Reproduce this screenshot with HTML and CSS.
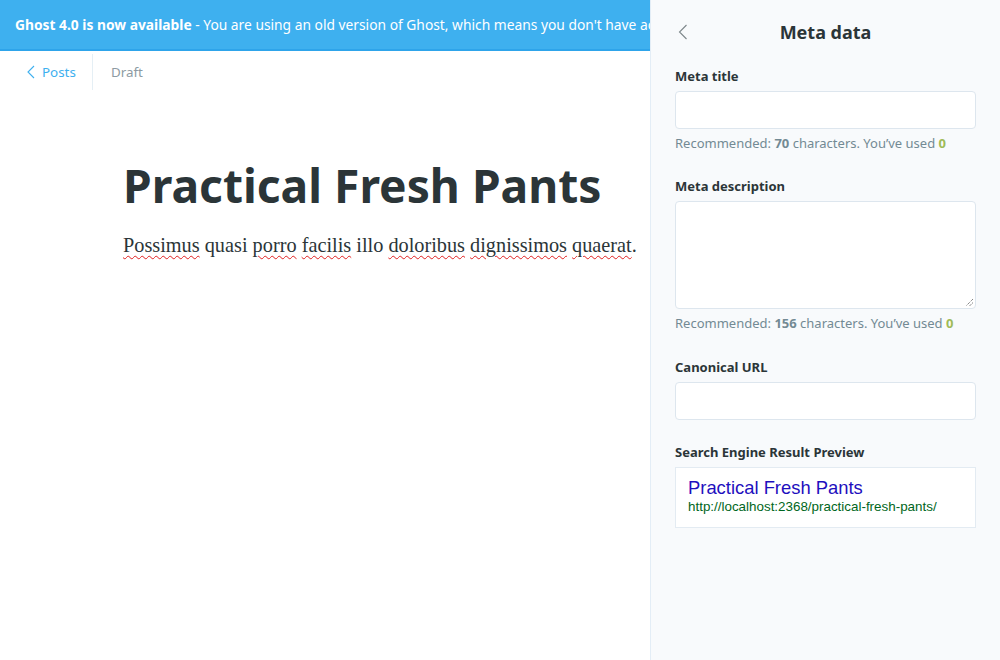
FILE: index.html
```html
<!DOCTYPE html>
<html>
<head>
<meta charset="utf-8">
<link rel="stylesheet" href="styles.css">
</head>
<body>
<div class="app">
  <main class="main">
    <div class="banner"><strong>Ghost 4.0 is now available</strong> - You are using an old version of Ghost, which means you don't have ac</div>
    <nav class="crumbs">
      <a class="back">
        <svg width="9" height="14" viewBox="0 0 9 14"><path d="M8 1 L2 7 L8 13" fill="none" stroke="#3eb0ef" stroke-width="1.1"/></svg>
        Posts
      </a>
      <span class="sep"></span>
      <span class="status">Draft</span>
    </nav>
    <article class="editor">
      <h1 class="title">Practical Fresh Pants</h1>
      <p class="body"><span class="sp">Possimus</span> quasi <span class="sp">porro</span> <span class="sp">facilis</span> illo <span class="sp">doloribus</span> <span class="sp">dignissimos</span> <span class="sp">quaerat</span>.</p>
    </article>
  </main>
  <aside class="panel">
    <header class="panel-head">
      <svg class="panel-back" width="10" height="16" viewBox="0 0 10 16"><path d="M8.5 1 L1.5 8 L8.5 15" fill="none" stroke="#7d878a" stroke-width="1.1"/></svg>
      <h2>Meta data</h2>
    </header>
    <div class="field">
      <label>Meta title</label>
      <div class="input"></div>
      <p class="hint">Recommended: <b>70</b> characters. You’ve used <b class="ok">0</b></p>
    </div>
    <div class="field field-tall">
      <label>Meta description</label>
      <div class="input textarea">
        <svg class="grip" width="9" height="9" viewBox="0 0 9 9"><path d="M8 1 L1 8 M8 4.5 L4.5 8" stroke="#555" stroke-width="1" stroke-dasharray="1 1"/></svg>
      </div>
      <p class="hint">Recommended: <b>156</b> characters. You’ve used <b class="ok">0</b></p>
    </div>
    <div class="field field-plain">
      <label>Canonical URL</label>
      <div class="input"></div>
    </div>
    <div class="field">
      <label>Search Engine Result Preview</label>
      <div class="serp">
        <div class="serp-title">Practical Fresh Pants</div>
        <div class="serp-url">http://localhost:2368/practical-fresh-pants/</div>
      </div>
    </div>
  </aside>
</div>
</body>
</html>
```
FILE: styles.css
```css
* { box-sizing: border-box; }
html, body { margin: 0; padding: 0; }
body {
  width: 1000px;
  height: 660px;
  overflow: hidden;
  font-family: "Noto Sans", "Open Sans", sans-serif;
  color: #3c484e;
  background: #fff;
}
.app {
  display: flex;
  height: 660px;
}
.main {
  width: 650px;
  flex: none;
  overflow: hidden;
}
.banner {
  height: 51px;
  background: #3eb0ef;
  border-bottom: 2px solid #2ea4ea;
  color: #fff;
  font-size: 13.8px;
  padding: 0 15px;
  line-height: 49px;
  white-space: nowrap;
  overflow: hidden;
}
.banner strong { font-weight: 700; }
.crumbs {
  display: flex;
  align-items: center;
  height: 40px;
  margin-top: 1px;
  font-size: 13.4px;
}
.back {
  display: flex;
  align-items: center;
  gap: 7px;
  color: #3eb0ef;
  padding-left: 26px;
  padding-right: 16px;
}
.sep {
  width: 1px;
  height: 36px;
  background: #e5eff5;
}
.status {
  color: #8d9ba3;
  padding-left: 18px;
}
.editor {
  padding: 0 0 0 123px;
  margin-top: 64px;
}
.title {
  margin: 0;
  font-size: 46.2px;
  line-height: 60px;
  font-weight: 700;
  color: #2b3538;
  white-space: nowrap;
}
.body {
  margin: 14px 0 0;
  font-family: "Liberation Serif", serif;
  font-size: 20.3px;
  line-height: 30px;
  color: #2b3538;
  white-space: nowrap;
}
.sp {
  text-decoration: underline wavy #e02020;
  text-decoration-thickness: 1px;
  text-underline-offset: 3px;
}
.panel {
  flex: 1;
  background: #f8fafc;
  border-left: 1px solid #e3edf6;
  padding: 0 24px 0 24px;
}
.panel-head {
  position: relative;
  height: 67px;
  padding-bottom: 3px;
  display: flex;
  align-items: center;
  justify-content: center;
}
.panel-back {
  position: absolute;
  left: 3px;
  top: 24px;
}
.panel-head h2 {
  margin: 0;
  font-size: 18px;
  font-weight: 700;
  color: #2b3538;
}
.field {
  margin-bottom: 25px;
}
.field-tall {
  margin-bottom: 26px;
}
.field-plain {
  margin-bottom: 23px;
}
.field label {
  display: block;
  font-size: 13px;
  font-weight: 700;
  color: #2b3538;
  line-height: 18px;
  margin-bottom: 6px;
}
.input {
  height: 38px;
  background: #fff;
  border: 1px solid #dde6ee;
  border-radius: 4px;
}
.textarea {
  height: 108px;
  position: relative;
}
.grip {
  position: absolute;
  right: 1px;
  bottom: 1px;
}
.hint {
  margin: 5px 0 0;
  font-size: 13px;
  color: #738a94;
  line-height: 18px;
}
.hint b { font-weight: 700; }
.hint .ok { color: #9fbb58; }
.serp {
  background: #fff;
  border: 1px solid #e3ebf2;
  padding: 9px 12px 12px;
  font-family: "Liberation Sans", Arial, sans-serif;
}
.serp-title {
  color: #1e0fbe;
  font-size: 18.4px;
  line-height: 22px;
}
.serp-url {
  color: #006621;
  font-size: 13.4px;
  line-height: 16px;
}
```
